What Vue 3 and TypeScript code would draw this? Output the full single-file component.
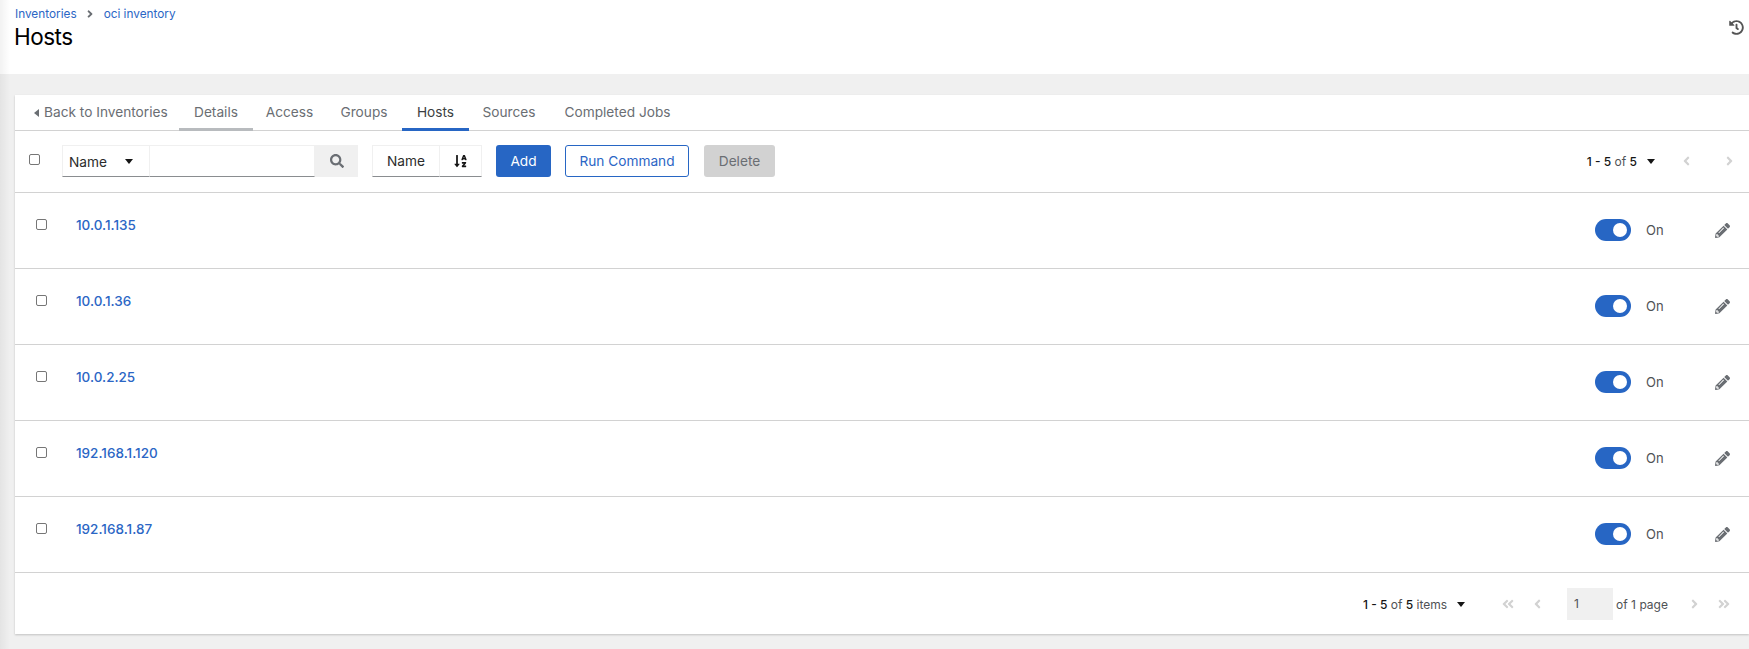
<script setup lang="ts">
const tabs = [
  { label: 'Details', cls: 'details', w: 74 },
  { label: 'Access', cls: '', w: 73 },
  { label: 'Groups', cls: '', w: 76 },
  { label: 'Hosts', cls: 'active', w: 67 },
  { label: 'Sources', cls: '', w: 80 },
  { label: 'Completed Jobs', cls: '', w: 137 },
]
const hosts = ['10.0.1.135', '10.0.1.36', '10.0.2.25', '192.168.1.120', '192.168.1.87']
const pencil = 'M497.9 142.1l-46.1 46.1c-4.7 4.7-12.3 4.7-17 0l-111-111c-4.7-4.7-4.7-12.3 0-17l46.1-46.1c18.7-18.7 49.1-18.7 67.9 0l60.1 60.1c18.8 18.7 18.8 49.1 0 67.9zM284.2 99.8L21.6 362.4.4 483.9c-2.9 16.4 11.4 30.6 27.8 27.8l121.5-21.3 262.6-262.6c4.7-4.7 4.7-12.3 0-17l-111-111c-4.8-4.7-12.4-4.7-17.1 0zM124.1 339.9c-5.5-5.5-5.5-14.3 0-19.8l154-154c5.5-5.5 14.3-5.5 19.8 0s5.5 14.3 0 19.8l-154 154c-5.5 5.5-14.3 5.5-19.8 0zM88 424h48v36.3l-64.5 11.3-31.1-31.1L51.7 376H88v48z'
const angleLeft = 'M31.7 239l136-136c9.4-9.4 24.6-9.4 33.9 0l22.6 22.6c9.4 9.4 9.4 24.6 0 33.9L127.9 256l96.4 96.4c9.4 9.4 9.4 24.6 0 33.9L201.7 409c-9.4 9.4-24.6 9.4-33.9 0l-136-136c-9.5-9.4-9.5-24.6-.1-34z'
const angleRight = 'M224.3 273l-136 136c-9.4 9.4-24.6 9.4-33.9 0l-22.6-22.6c-9.4-9.4-9.4-24.6 0-33.9l96.4-96.4-96.4-96.4c-9.4-9.4-9.4-24.6 0-33.9L54.3 103c9.4-9.4 24.6-9.4 33.9 0l136 136c9.5 9.4 9.5 24.6.1 34z'
const doubleLeft = 'M223.7 239l136-136c9.4-9.4 24.6-9.4 33.9 0l22.6 22.6c9.4 9.4 9.4 24.6 0 33.9L319.9 256l96.4 96.4c9.4 9.4 9.4 24.6 0 33.9L393.7 409c-9.4 9.4-24.6 9.4-33.9 0l-136-136c-9.5-9.4-9.5-24.6-.1-34zm-192 34l136 136c9.4 9.4 24.6 9.4 33.9 0l22.6-22.6c9.4-9.4 9.4-24.6 0-33.9L127.9 256l96.4-96.4c9.4-9.4 9.4-24.6 0-33.9L201.7 103c-9.4-9.4-24.6-9.4-33.9 0l-136 136c-9.5 9.4-9.5 24.6-.1 34z'
const doubleRight = 'M224.3 273l-136 136c-9.4 9.4-24.6 9.4-33.9 0l-22.6-22.6c-9.4-9.4-9.4-24.6 0-33.9l96.4-96.4-96.4-96.4c-9.4-9.4-9.4-24.6 0-33.9L54.3 103c9.4-9.4 24.6-9.4 33.9 0l136 136c9.5 9.4 9.5 24.6.1 34zm192-34l-136-136c-9.4-9.4-24.6-9.4-33.9 0l-22.6 22.6c-9.4 9.4-9.4 24.6 0 33.9l96.4 96.4-96.4 96.4c-9.4 9.4-9.4 24.6 0 33.9l22.6 22.6c9.4 9.4 24.6 9.4 33.9 0l136-136c9.4-9.2 9.4-24.4 0-33.8z'
</script>

<template>
  <div class="page">
    <div class="edge"></div>
    <header class="head">
      <div>
        <nav class="crumbs">
          <a class="link">Inventories</a>
          <svg class="crumb-sep" viewBox="0 0 256 512"><path :d="angleRight" /></svg>
          <a class="link">oci inventory</a>
        </nav>
        <h1 class="title">Hosts</h1>
      </div>
      <svg class="history" viewBox="0 0 512 512"><path d="M504 255.531c.253 136.64-111.18 248.372-247.82 248.468-59.015.042-113.223-20.53-155.822-54.911-11.077-8.94-11.905-25.541-1.839-35.607l11.267-11.267c8.609-8.609 22.353-9.551 31.891-1.984C173.062 425.135 212.781 440 256 440c101.705 0 184-82.311 184-184 0-101.705-82.311-184-184-184-48.814 0-93.149 18.969-126.068 49.932l50.754 50.754c10.08 10.08 2.941 27.314-11.313 27.314H24c-8.837 0-16-7.163-16-16V38.627c0-14.254 17.234-21.393 27.314-11.314l49.372 49.372C129.209 34.136 189.552 8 256 8c136.81 0 247.747 110.78 248 247.531zm-180.912 78.784l9.823-12.63c8.138-10.463 6.253-25.542-4.21-33.679L288 256.349V152c0-13.255-10.745-24-24-24h-16c-13.255 0-24 10.745-24 24v135.651l65.409 50.874c10.463 8.137 25.541 6.253 33.679-4.21z" /></svg>
    </header>

    <main class="main">
      <section class="card">
        <div class="tabs">
          <a class="back"><span class="back-caret"></span>Back to Inventories</a>
          <a v-for="t in tabs" :key="t.label" class="tab" :class="t.cls" :style="{ width: t.w + 'px' }">{{ t.label }}</a>
        </div>

        <div class="toolbar">
          <input class="check" type="checkbox" aria-label="Select all" />
          <div class="search">
            <div class="select"><span>Name</span><span class="caret"></span></div>
            <div class="input"></div>
            <div class="search-btn">
              <svg class="search-icon" viewBox="0 0 512 512"><path d="M505 442.7L405.3 343c-4.5-4.5-10.6-7-17-7H372c27.6-35.3 44-79.7 44-128C416 93.1 322.9 0 208 0S0 93.1 0 208s93.1 208 208 208c48.3 0 92.7-16.4 128-44v16.3c0 6.4 2.5 12.5 7 17l99.7 99.7c9.4 9.4 24.6 9.4 33.9 0l28.3-28.3c9.4-9.4 9.4-24.6.1-34zM208 336c-70.7 0-128-57.2-128-128 0-70.7 57.2-128 128-128 70.7 0 128 57.2 128 128 0 70.7-57.2 128-128 128z" /></svg>
            </div>
          </div>
          <div class="sort">
            <div class="sort-name">Name</div>
            <div class="sort-btn">
              <svg class="sort-icon" viewBox="0 0 448 512"><path d="M176 352h-48V48a16 16 0 0 0-16-16H80a16 16 0 0 0-16 16v304H16c-14.19 0-21.36 17.24-11.29 27.31l80 96a16 16 0 0 0 22.62 0l80-96C197.35 369.26 190.22 352 176 352zm240-64H288a16 16 0 0 0-16 16v32a16 16 0 0 0 16 16h56l-61.26 70.45A32 32 0 0 0 272 446.37V464a16 16 0 0 0 16 16h128a16 16 0 0 0 16-16v-32a16 16 0 0 0-16-16h-56l61.26-70.45A32 32 0 0 0 432 321.63V304a16 16 0 0 0-16-16zm31.06-85.38l-59.27-160A16 16 0 0 0 372.72 32h-41.44a16 16 0 0 0-15.07 10.62l-59.27 160A16 16 0 0 0 272 224h24.83a16 16 0 0 0 15.42-11.62l4.41-15.38h70.68l4.41 15.38A16 16 0 0 0 407.17 224H432a16 16 0 0 0 15.06-21.38zM335.61 144L352 96l16.39 48z" /></svg>
            </div>
          </div>
          <button class="btn primary">Add</button>
          <button class="btn outline">Run Command</button>
          <button class="btn disabled">Delete</button>
          <div class="pager-top">
            <span class="count"><b>1 - 5</b> of <b>5</b></span>
            <span class="caret"></span>
            <svg class="angle a1" viewBox="0 0 256 512"><path :d="angleLeft" /></svg>
            <svg class="angle a2" viewBox="0 0 256 512"><path :d="angleRight" /></svg>
          </div>
        </div>

        <div v-for="h in hosts" :key="h" class="row">
          <input class="check" type="checkbox" :aria-label="h" />
          <a class="link host">{{ h }}</a>
          <span class="switch"><span class="knob"></span></span>
          <span class="on">On</span>
          <svg class="pencil" viewBox="0 0 512 512"><path :d="pencil" /></svg>
        </div>

        <div class="footer">
          <span class="count items"><b>1 - 5</b> of <b>5</b> items</span>
          <span class="caret"></span>
          <svg class="angle dbl d1" viewBox="0 0 448 512"><path :d="doubleLeft" /></svg>
          <svg class="angle f1" viewBox="0 0 256 512"><path :d="angleLeft" /></svg>
          <span class="page-input">1</span>
          <span class="of">of 1 page</span>
          <svg class="angle f2" viewBox="0 0 256 512"><path :d="angleRight" /></svg>
          <svg class="angle dbl d2" viewBox="0 0 448 512"><path :d="doubleRight" /></svg>
        </div>
      </section>
    </main>
  </div>
</template>

<style>
html, body { margin: 0; background: #f0f0f0; }
</style>

<style scoped>
.page {
  position: relative;
  height: 649px;
  overflow: hidden;
  background: #f0f0f0;
  font-family: Inter, "Noto Sans", sans-serif;
  font-size: 13.7px;
  color: #2b2b2b;
}
.edge {
  position: absolute;
  left: 0;
  top: 0;
  bottom: 0;
  width: 10px;
  background: linear-gradient(90deg, rgba(0,0,0,.05), rgba(0,0,0,0));
  pointer-events: none;
}
.head {
  height: 74px;
  background: #fff;
  display: flex;
  justify-content: space-between;
  padding: 6px 5px 0 15px;
  box-sizing: border-box;
}
.crumbs { display: flex; align-items: center; height: 16px; font-size: 11.8px; line-height: 16px; }
.crumb-sep { width: 6px; height: 12px; fill: #6a6e73; margin: 0 11px 0 10px; }
.link { color: #2b66c5; }
.title { margin: 0 0 0 -1px; font-size: 22.5px; font-weight: 400; line-height: 30px; color: #000; letter-spacing: -.5px; }
.history { width: 15px; height: 15px; fill: #555; margin-top: 14px; }
.main { padding: 21px 0 0 15px; }
.card { background: #fff; height: 539px; box-shadow: 0 1px 2px rgba(0,0,0,.2); }
.tabs {
  height: 36px;
  box-sizing: border-box;
  display: flex;
  border-bottom: 1px solid #d2d2d2;
  color: #6a6e73;
}
.back { width: 164px; padding-left: 19px; box-sizing: border-box; line-height: 35px; display: flex; align-items: center; white-space: nowrap; }
.back-caret { width: 0; height: 0; border: 4px solid transparent; border-left: 0; border-right: 5px solid #6a6e73; margin-right: 5px; }
.tab { line-height: 35px; height: 35px; text-align: center; box-sizing: border-box; position: relative; white-space: nowrap; }
.tab.details::after, .tab.active::after {
  content: "";
  position: absolute;
  left: 0;
  right: 0;
  bottom: -1px;
  height: 3px;
  background: #b8bbbe;
}
.tab.active { color: #3c3f42; }
.tab.active::after { background: #2766c4; }
.toolbar {
  height: 62px;
  border-bottom: 1px solid #d2d2d2;
  display: flex;
  align-items: flex-start;
  padding: 14px 0 0 14px;
  box-sizing: border-box;
}
.toolbar > .check { margin: 9px 22px 0 0; }
.check {
  appearance: none;
  -webkit-appearance: none;
  margin: 0;
  width: 11px;
  height: 11px;
  border: 1px solid #767676;
  border-radius: 2px;
  background: #fff;
  flex: none;
  box-sizing: border-box;
}
.search { display: flex; height: 32px; }
.select {
  width: 88px;
  box-sizing: border-box;
  display: flex;
  align-items: center;
  justify-content: space-between;
  padding: 1px 16px 0 6px;
  border: 1px solid #f0f0f0;
  border-bottom: 1px solid #8a8d90;
}
.caret { width: 0; height: 0; border: 4.5px solid transparent; border-top: 5.5px solid #151515; border-bottom: 0; display: inline-block; flex: none; }
.input { width: 165px; border: 1px solid #f0f0f0; border-left: 0; border-bottom: 1px solid #8a8d90; box-sizing: border-box; }
.search-btn { width: 43px; background: #f0f0f0; display: flex; align-items: center; justify-content: center; }
.search-icon { width: 14px; height: 14px; fill: #6a6e73; }
.sort { display: flex; height: 32px; margin-left: 14px; }
.sort-name {
  width: 68px;
  box-sizing: border-box;
  text-align: center;
  line-height: 31px;
  border: 1px solid #f0f0f0;
  border-bottom: 1px solid #8a8d90;
}
.sort-btn { width: 42px; box-sizing: border-box; display: flex; align-items: center; justify-content: center; border: 1px solid #f0f0f0; border-left: 0; border-bottom: 1px solid #8a8d90; }
.sort-icon { width: 13px; height: 14px; fill: #151515; }
.btn {
  height: 32px;
  border-radius: 3px;
  font: inherit;
  padding: 0;
  box-sizing: border-box;
  border: 0;
  margin-left: 14px;
}
.primary { width: 55px; background: #2766c4; color: #fff; }
.outline { width: 124px; background: #fff; color: #2b66c5; border: 1px solid #2766c4; }
.disabled { width: 71px; background: #d2d2d2; color: #6a6e73; margin-left: 15px; }
.pager-top { margin-left: auto; display: flex; align-items: center; height: 32px; font-size: 12px; padding-right: 16px; }
.count { color: #4f5255; white-space: nowrap; }
.count b { font-weight: 500; color: #151515; }
.pager-top .caret { margin-left: 10px; }
.angle { width: 7px; height: 14px; fill: #d2d2d2; flex: none; }
.a1 { margin-left: 28px; }
.a2 { margin-left: 36px; }
.row {
  height: 76px;
  box-sizing: border-box;
  border-bottom: 1px solid #d2d2d2;
  display: flex;
  align-items: flex-start;
  padding: 26px 0 0 21px;
}
.row > .check { margin-right: 29px; }
.host { font-size: 13.5px; font-weight: 500; line-height: 14px; margin-top: -1px; }
.switch {
  margin-left: auto;
  width: 36px;
  height: 22px;
  border-radius: 11px;
  background: #2766c4;
  position: relative;
}
.knob { position: absolute; width: 14px; height: 14px; border-radius: 50%; background: #fff; right: 4px; top: 4px; }
.on { margin: 2px 0 0 15px; font-size: 13px; line-height: 18px; color: #4f5255; width: 18px; }
.pencil { width: 15px; height: 15px; fill: #6a6e73; margin: 4px 19px 0 51px; }
.footer { height: 62px; display: flex; align-items: center; font-size: 12px; padding-left: 1348px; box-sizing: border-box; }
.footer .caret { margin-left: 10px; }
.dbl { width: 12px; }
.d1 { margin-left: 37px; }
.f1 { margin-left: 20px; }
.page-input { width: 46px; height: 32px; line-height: 32px; margin-left: 26px; padding-left: 7px; box-sizing: border-box; background: #f0f0f0; color: #4f5255; }
.of { margin-left: 3px; color: #4f5255; white-space: nowrap; }
.f2 { margin-left: 23px; }
.d2 { margin-left: 20px; }
</style>
